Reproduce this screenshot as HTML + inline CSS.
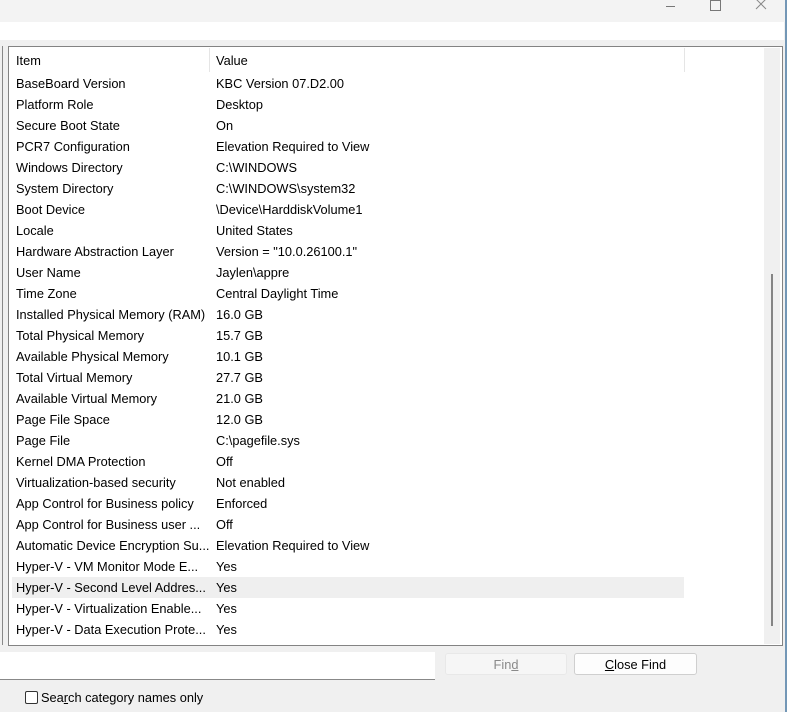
<!DOCTYPE html><html><head><style>
body{margin:0;width:787px;height:712px;background:#f0f0f0;position:relative;overflow:hidden;font-family:"Liberation Sans",sans-serif;font-size:12.8px;color:#000}
.a{position:absolute}
.row{position:absolute;left:16px;height:21px;line-height:21px;white-space:nowrap}
.v{position:absolute;left:200px}
</style></head><body>
<div class="a" style="left:0;top:0;width:787px;height:22px;background:#f3f3f3"></div>
<div class="a" style="left:0;top:22px;width:784px;height:18px;background:#fff"></div>
<div class="a" style="left:666px;top:6px;width:9px;height:1px;background:#777"></div>
<div class="a" style="left:710px;top:0px;width:9px;height:9px;border:1px solid #777"></div>
<svg class="a" style="left:755px;top:0" width="12" height="10"><path d="M1 -1L11 9M11 -1L1 9" stroke="#888" stroke-width="1"/></svg>
<div class="a" style="left:785px;top:0;width:2px;height:712px;background:#7397b6"></div>
<div class="a" style="left:2px;top:46px;width:1px;height:599px;background:#888"></div>
<div class="a" style="left:8px;top:46px;width:773px;height:598px;border:1px solid #838383;background:#fff"></div>
<div class="a" style="left:764px;top:48px;width:16px;height:596px;background:#f0f0f0"></div>
<div class="a" style="left:771px;top:274px;width:2px;height:352px;background:#858585"></div>
<div class="a" style="left:209px;top:48px;width:1px;height:24px;background:#e5e5e5"></div>
<div class="a" style="left:684px;top:48px;width:1px;height:24px;background:#e5e5e5"></div>
<div class="a" style="left:12px;top:577px;width:672px;height:21px;background:#efefef"></div>
<div class="row" style="top:50px">Item<span class="v">Value</span></div>
<div class="row" style="top:73px">BaseBoard Version<span class="v">KBC Version 07.D2.00</span></div>
<div class="row" style="top:94px">Platform Role<span class="v">Desktop</span></div>
<div class="row" style="top:115px">Secure Boot State<span class="v">On</span></div>
<div class="row" style="top:136px">PCR7 Configuration<span class="v">Elevation Required to View</span></div>
<div class="row" style="top:157px">Windows Directory<span class="v">C:\WINDOWS</span></div>
<div class="row" style="top:178px">System Directory<span class="v">C:\WINDOWS\system32</span></div>
<div class="row" style="top:199px">Boot Device<span class="v">\Device\HarddiskVolume1</span></div>
<div class="row" style="top:220px">Locale<span class="v">United States</span></div>
<div class="row" style="top:241px">Hardware Abstraction Layer<span class="v">Version = "10.0.26100.1"</span></div>
<div class="row" style="top:262px">User Name<span class="v">Jaylen\appre</span></div>
<div class="row" style="top:283px">Time Zone<span class="v">Central Daylight Time</span></div>
<div class="row" style="top:304px">Installed Physical Memory (RAM)<span class="v">16.0 GB</span></div>
<div class="row" style="top:325px">Total Physical Memory<span class="v">15.7 GB</span></div>
<div class="row" style="top:346px">Available Physical Memory<span class="v">10.1 GB</span></div>
<div class="row" style="top:367px">Total Virtual Memory<span class="v">27.7 GB</span></div>
<div class="row" style="top:388px">Available Virtual Memory<span class="v">21.0 GB</span></div>
<div class="row" style="top:409px">Page File Space<span class="v">12.0 GB</span></div>
<div class="row" style="top:430px">Page File<span class="v">C:\pagefile.sys</span></div>
<div class="row" style="top:451px">Kernel DMA Protection<span class="v">Off</span></div>
<div class="row" style="top:472px">Virtualization-based security<span class="v">Not enabled</span></div>
<div class="row" style="top:493px">App Control for Business policy<span class="v">Enforced</span></div>
<div class="row" style="top:514px">App Control for Business user ...<span class="v">Off</span></div>
<div class="row" style="top:535px">Automatic Device Encryption Su...<span class="v">Elevation Required to View</span></div>
<div class="row" style="top:556px">Hyper-V - VM Monitor Mode E...<span class="v">Yes</span></div>
<div class="row" style="top:577px">Hyper-V - Second Level Addres...<span class="v">Yes</span></div>
<div class="row" style="top:598px">Hyper-V - Virtualization Enable...<span class="v">Yes</span></div>
<div class="row" style="top:619px">Hyper-V - Data Execution Prote...<span class="v">Yes</span></div>
<div class="a" style="left:0;top:652px;width:435px;height:27px;background:#fff;border-bottom:1px solid #888"></div>
<div class="a" style="left:445px;top:653px;width:120px;height:20px;border:1px solid #e8e8e8;border-radius:3px;background:#f6f6f6;color:#8a8a8a;text-align:center;line-height:21px">Fin<u>d</u></div>
<div class="a" style="left:574px;top:653px;width:121px;height:20px;border:1px solid #cfcfcf;border-radius:3px;background:#fdfdfd;text-align:center;line-height:21px"><u>C</u>lose Find</div>
<div class="a" style="left:25px;top:691px;width:11px;height:11px;border:1px solid #333;border-radius:2px;background:#fff"></div>
<div class="a" style="left:41px;top:690px;line-height:16px">Sea<u>r</u>ch category names only</div>
</body></html>
